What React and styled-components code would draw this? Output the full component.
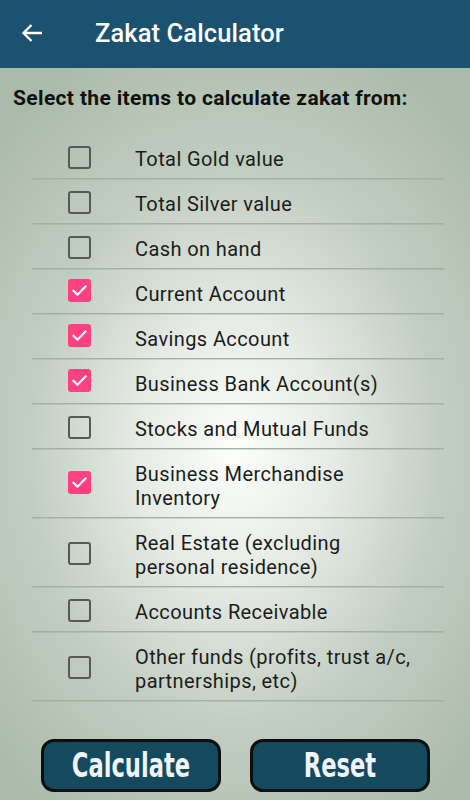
import React, { useState } from "react";
import styled, { createGlobalStyle } from "styled-components";

const Global = createGlobalStyle`
  html, body { margin: 0; padding: 0; }
  body { font-family: Roboto, "Noto Sans", sans-serif; }
`;

const Screen = styled.div`
  width: 470px;
  height: 800px;
  display: flex;
  flex-direction: column;
  overflow: hidden;
`;

const AppBar = styled.header`
  height: 68px;
  flex: none;
  background: #1b5270;
  display: flex;
  align-items: center;
  padding-left: 20px;
  gap: 51px;
  color: #fff;
`;

const BackButton = styled.button`
  background: none;
  border: none;
  padding: 0;
  width: 24px;
  height: 24px;
  display: flex;
  align-items: center;
  justify-content: center;
  color: #fff;
  cursor: pointer;
  margin-bottom: 2px;
`;

const Title = styled.h1`
  margin: 0 0 2px 0;
  font-family: Roboto, sans-serif;
  font-weight: 500;
  font-size: 25.5px;
  letter-spacing: 0.1px;
`;

const Body = styled.main`
  flex: 1;
  display: flex;
  flex-direction: column;
  background: radial-gradient(
    ellipse 70% 60% at 50% 52%,
    #fdfefc 0%,
    #e6ebe5 30%,
    #c3cec2 62%,
    #abbbab 100%
  );
`;

const Prompt = styled.p`
  margin: 17px 0 0 13px;
  font-family: Roboto, sans-serif;
  font-weight: 700;
  font-size: 21px;
  line-height: 26px;
  letter-spacing: 0.35px;
  color: #111;
`;

const List = styled.ul`
  list-style: none;
  margin: 23px 0 0 32px;
  padding: 0;
  width: 412px;
`;

const Row = styled.li`
  display: flex;
  align-items: center;
  padding: 13px 0 7px;
  border-bottom: 1px solid #a3b0a2;
  box-shadow: 0 1px 0 rgba(150, 165, 150, 0.35);
  cursor: pointer;
`;

const Box = styled.span`
  flex: none;
  box-sizing: border-box;
  width: 23px;
  height: 23px;
  margin-left: 36px;
  margin-top: ${(p) => (p.$checked ? "-7px" : "-4px")};
  border-radius: 3px;
  border: ${(p) => (p.$checked ? "none" : "2.5px solid #555a55")};
  background: ${(p) => (p.$checked ? "#ff4081" : "transparent")};
  display: flex;
  align-items: center;
  justify-content: center;
`;

const Label = styled.span`
  margin-left: 44px;
  font-family: Roboto, sans-serif;
  font-size: 20px;
  line-height: 24px;
  color: #1c1c1c;
  letter-spacing: 0.4px;
`;

const Actions = styled.div`
  display: flex;
  justify-content: center;
  gap: 29px;
  margin-top: 38px;
  padding-left: 1px;
`;

const ActionButton = styled.button`
  box-sizing: border-box;
  width: 180px;
  height: 53px;
  border: 3px solid #0b0f10;
  border-radius: 13px;
  background: #154a5e;
  color: #eef4f7;
  display: flex;
  align-items: center;
  justify-content: center;
  padding: 0 0 2px 0;
  cursor: pointer;
`;

const ButtonText = styled.span`
  display: inline-block;
  font-family: "DejaVu Sans Condensed", "DejaVu Sans", sans-serif;
  font-weight: 700;
  font-size: 34px;
  line-height: 40px;
  transform: scaleX(0.74);
  white-space: nowrap;
`;

const items = [
  ["Total Gold value", false],
  ["Total Silver value", false],
  ["Cash on hand", false],
  ["Current Account", true],
  ["Savings Account", true],
  ["Business Bank Account(s)", true],
  ["Stocks and Mutual Funds", false],
  ["Business Merchandise\nInventory", true],
  ["Real Estate (excluding\npersonal residence)", false],
  ["Accounts Receivable", false],
  ["Other funds (profits, trust a/c,\npartnerships, etc)", false],
];

function Check() {
  return (
    <svg width="17" height="17" viewBox="0 0 24 24" fill="none">
      <path d="M3.5 12.5l5.5 5.5L20.5 6.5" stroke="#fff" strokeWidth="3" strokeLinecap="square" />
    </svg>
  );
}

export default function App() {
  const [state, setState] = useState(items.map((i) => i[1]));
  return (
    <Screen>
      <Global />
      <AppBar>
        <BackButton aria-label="Back">
          <svg width="22" height="20" viewBox="0 0 22 20" fill="none">
            <path d="M21 10H2.5M10.5 2L2.5 10l8 8" stroke="#fff" strokeWidth="2.4" />
          </svg>
        </BackButton>
        <Title>Zakat Calculator</Title>
      </AppBar>
      <Body>
        <Prompt>Select the items to calculate zakat from:</Prompt>
        <List>
          {items.map(([label], i) => (
            <Row
              key={label}
              onClick={() => setState((s) => s.map((v, j) => (j === i ? !v : v)))}
            >
              <Box $checked={state[i]}>{state[i] && <Check />}</Box>
              <Label>
                {label.split("\n").map((l, k) => (
                  <React.Fragment key={k}>
                    {k > 0 && <br />}
                    {l}
                  </React.Fragment>
                ))}
              </Label>
            </Row>
          ))}
        </List>
        <Actions>
          <ActionButton>
            <ButtonText>Calculate</ButtonText>
          </ActionButton>
          <ActionButton>
            <ButtonText>Reset</ButtonText>
          </ActionButton>
        </Actions>
      </Body>
    </Screen>
  );
}
